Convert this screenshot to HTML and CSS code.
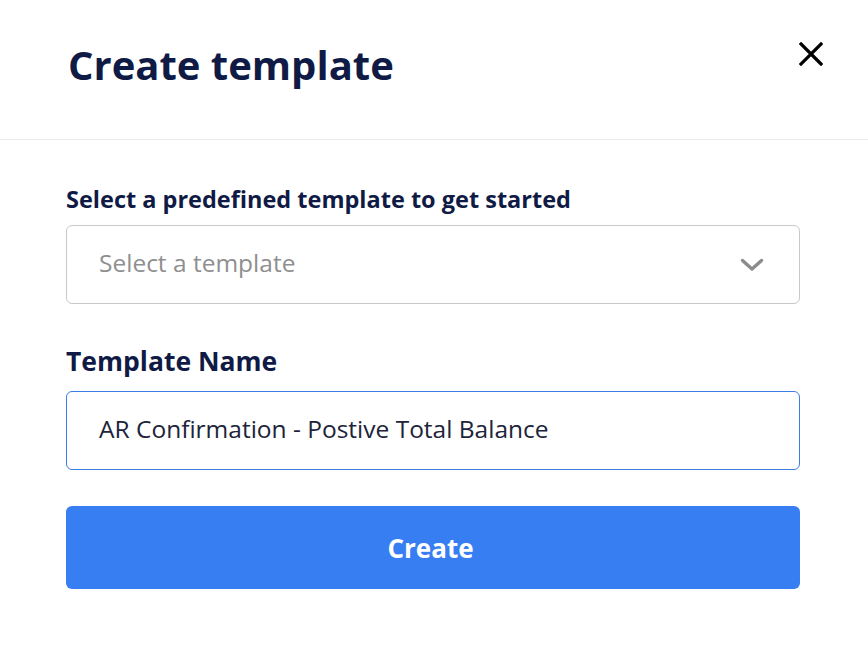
FILE: index.html
```html
<!DOCTYPE html>
<html>
<head>
<meta charset="utf-8">
<link rel="stylesheet" href="styles.css">
</head>
<body>
<div class="modal">
  <header class="head">
    <h1 class="title">Create template</h1>
    <button class="close" aria-label="Close">
      <svg width="24" height="24" viewBox="0 0 24 24"><path d="M2 2L22 22M22 2L2 22" stroke="#000" stroke-width="3.2" stroke-linecap="square" fill="none"/></svg>
    </button>
  </header>
  <div class="body">
    <label class="label label-sm">Select a predefined template to get started</label>
    <div class="field select">
      <span class="placeholder">Select a template</span>
      <svg class="chev" width="24" height="14" viewBox="0 0 24 14"><path d="M2.5 2.5L12 11L21.5 2.5" stroke="#8c8c8c" stroke-width="3.4" fill="none" stroke-linecap="round" stroke-linejoin="round"/></svg>
    </div>
    <label class="label label-lg">Template Name</label>
    <div class="field input">AR Confirmation - Postive Total Balance</div>
    <button class="btn">Create</button>
  </div>
</div>
</body>
</html>
```
FILE: styles.css
```css
* { box-sizing: border-box; }
html, body { margin: 0; padding: 0; background: #fff; }
body { font-family: "Open Sans", "Noto Sans", sans-serif; width: 868px; height: 668px; overflow: hidden; }
.modal { width: 868px; }
.head {
  height: 140px;
  border-bottom: 1px solid #ebebeb;
  display: flex;
  align-items: flex-start;
  justify-content: space-between;
  padding: 38px 45px 0 68px;
}
.title { margin: 0; font-size: 40px; font-weight: 700; color: #0f1a45; line-height: 54px; }
.close { background: none; border: 0; padding: 0; margin-top: 4px; width: 24px; height: 24px; display: flex; }
.body { padding: 44px 68px 0 66px; display: flex; flex-direction: column; }
.label { color: #0f1a45; font-weight: 700; display: block; }
.label-sm { font-size: 23.5px; line-height: 30px; margin-bottom: 11px; }
.label-lg { font-size: 26.5px; line-height: 34px; margin-top: 40px; margin-bottom: 13px; }
.field {
  height: 79px;
  border-radius: 6px;
  display: flex;
  align-items: center;
  padding: 0 32px;
  font-size: 24.5px;
  line-height: 30px;
}
.field > span, .input { padding-bottom: 0; }
.select { border: 1px solid #c9c9c9; justify-content: space-between; }
.placeholder { color: #8f8f8f; margin-top: -3px; }
.chev { margin-right: 3px; }
.input { border: 1px solid #3b7de6; color: #20243a; padding-bottom: 4px; }
.btn {
  margin-top: 36px;
  height: 83px;
  border: 0;
  border-radius: 6px;
  background: #377ef2;
  color: #fff;
  font-family: inherit;
  font-size: 26px;
  font-weight: 700;
  padding: 0 5px 0 0;
}
```
